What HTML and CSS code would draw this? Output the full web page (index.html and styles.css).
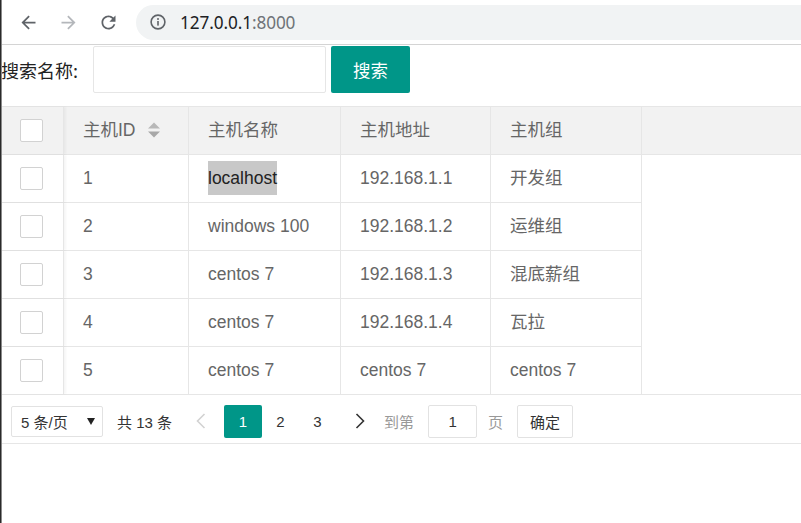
FILE: index.html
```html
<!DOCTYPE html>
<html lang="zh-CN">
<head>
<meta charset="utf-8">
<title>主机列表</title>
<link rel="stylesheet" href="styles.css">
</head>
<body>
<div class="window-edge"></div>
<header class="browser-bar">
  <span class="nav-btn">
    <svg viewBox="0 0 24 24"><path class="ico-dark" d="M20 11H7.830l5.59-5.59L12 4l-8 8 8 8 1.41-1.41L7.830 13H20v-2z"/></svg>
  </span>
  <span class="nav-btn">
    <svg viewBox="0 0 24 24"><path class="ico-light" d="M4 11h12.17l-5.59-5.59L12 4l8 8-8 8-1.41-1.41L16.17 13H4v-2z"/></svg>
  </span>
  <span class="nav-btn">
    <svg viewBox="0 0 24 24"><path class="ico-dark" d="M17.65 6.35C16.2 4.9 14.21 4 12 4c-4.42 0-7.99 3.58-7.99 8s3.57 8 7.99 8c3.73 0 6.84-2.55 7.73-6h-2.08c-.82 2.33-3.04 4-5.65 4-3.31 0-6-2.69-6-6s2.69-6 6-6c1.66 0 3.14.69 4.22 1.78L13 11h7V4l-2.35 2.35z"/></svg>
  </span>
  <div class="omnibox">
    <svg class="info-ico" viewBox="0 0 16 16">
      <circle cx="8" cy="8" r="6.9" fill="none" stroke="#5f6368" stroke-width="1.6"/>
      <rect x="7.2" y="7" width="1.6" height="4.6" fill="#5f6368"/>
      <circle cx="8" cy="4.9" r="1" fill="#5f6368"/>
    </svg>
    <span class="url"><span class="host">127.0.0.1</span><span class="port">:8000</span></span>
  </div>
</header>

<main class="page">
  <form class="search-row">
    <label class="search-label">搜索名称:</label>
    <input class="search-input" type="text">
    <button class="btn-primary" type="button">搜索</button>
  </form>

  <div class="table">
    <div class="thead">
      <div class="cell check"><span class="checkbox"></span></div>
      <div class="cell">主机ID
        <svg class="sort" viewBox="0 0 12 16"><polygon points="0,6.5 6,0.5 12,6.5" fill="#b8b8b8"/><polygon points="0,9.5 6,15.5 12,9.5" fill="#a8a8a8"/></svg>
      </div>
      <div class="cell">主机名称</div>
      <div class="cell">主机地址</div>
      <div class="cell">主机组</div>
      <div class="cell filler"></div>
    </div>
    <div class="tr">
      <div class="cell check"><span class="checkbox"></span></div>
      <div class="cell">1</div>
      <div class="cell"><span class="selected">localhost</span></div>
      <div class="cell">192.168.1.1</div>
      <div class="cell">开发组</div>
    </div>
    <div class="tr">
      <div class="cell check"><span class="checkbox"></span></div>
      <div class="cell">2</div>
      <div class="cell">windows 100</div>
      <div class="cell">192.168.1.2</div>
      <div class="cell">运维组</div>
    </div>
    <div class="tr">
      <div class="cell check"><span class="checkbox"></span></div>
      <div class="cell">3</div>
      <div class="cell">centos 7</div>
      <div class="cell">192.168.1.3</div>
      <div class="cell">混底薪组</div>
    </div>
    <div class="tr">
      <div class="cell check"><span class="checkbox"></span></div>
      <div class="cell">4</div>
      <div class="cell">centos 7</div>
      <div class="cell">192.168.1.4</div>
      <div class="cell">瓦拉</div>
    </div>
    <div class="tr">
      <div class="cell check"><span class="checkbox"></span></div>
      <div class="cell">5</div>
      <div class="cell">centos 7</div>
      <div class="cell">centos 7</div>
      <div class="cell">centos 7</div>
    </div>
  </div>

  <div class="pager">
    <div class="page-size"><span>5 条/页</span><svg class="caret" viewBox="0 0 8 7"><polygon points="0,0 8,0 4,7" fill="#222"/></svg></div>
    <span class="total">共 13 条</span>
    <span class="pg prev"><svg viewBox="0 0 10 16"><polyline points="8.5,1 1.5,8 8.5,15" fill="none" stroke="#d2d2d2" stroke-width="1.6"/></svg></span>
    <span class="pg active">1</span>
    <span class="pg">2</span>
    <span class="pg">3</span>
    <span class="pg next"><svg viewBox="0 0 10 16"><polyline points="1.5,1 8.5,8 1.5,15" fill="none" stroke="#333" stroke-width="1.6"/></svg></span>
    <span class="muted goto">到第</span>
    <span class="jump-input">1</span>
    <span class="muted page-word">页</span>
    <span class="btn-confirm">确定</span>
  </div>
</main>
</body>
</html>
```

FILE: styles.css
```css
* { box-sizing: border-box; }
html, body { margin: 0; padding: 0; background: #fff; }
body {
  width: 801px;
  height: 523px;
  overflow: hidden;
  position: relative;
  font-family: "Liberation Sans", "Noto Sans CJK SC", sans-serif;
  color: #666;
}

.window-edge {
  position: absolute;
  left: 0; top: 0; bottom: 0;
  width: 2px;
  background: linear-gradient(to right, #2a2a2a 0 1px, #8a8a8a 1px 2px);
  z-index: 10;
}

/* browser chrome */
.browser-bar {
  display: flex;
  align-items: center;
  height: 45px;
  border-bottom: 1px solid #d4d4d4;
  padding-left: 8px;
  overflow: hidden;
}
.nav-btn {
  width: 40px;
  height: 44px;
  display: flex;
  align-items: center;
  justify-content: center;
  flex: none;
}
.nav-btn svg { width: 21px; height: 21px; }
.ico-dark { fill: #5f6368; }
.ico-light { fill: #b4b7bb; }
.omnibox {
  flex: 1;
  margin-left: 8px;
  margin-right: -30px;
  height: 35px;
  border-radius: 18px;
  background: #f1f3f4;
  display: flex;
  align-items: center;
  padding-left: 14px;
  gap: 14px;
}
.info-ico { width: 16px; height: 16px; flex: none; }
.url { font-family: "Noto Sans", sans-serif; font-size: 17.2px; letter-spacing: -0.1px; }
.host { color: #202124; }
.port { color: #6f7378; }

/* search */
.search-row {
  display: flex;
  align-items: center;
  height: 47px;
  margin: 1px 0 0;
}
.search-label {
  width: 93px;
  padding-left: 1px;
  font-family: "Noto Sans CJK SC", sans-serif;
  font-size: 18px;
  color: #222;
}
.search-input {
  width: 233px;
  height: 47px;
  border: 1px solid #e6e6e6;
  border-radius: 2px;
  margin: 0;
  padding: 0 10px;
  background: #fff;
}
.btn-primary {
  margin-left: 5px;
  width: 79px;
  height: 47px;
  border: 0;
  border-radius: 2px;
  background: #009688;
  color: #fff;
  font-family: "Noto Sans CJK SC", sans-serif;
  font-size: 17.5px;
  padding: 0;
}

/* table */
.table { margin-top: 13px; }
.thead {
  display: grid;
  grid-template-columns: 64px 125px 152px 150px 151px 1fr;
  height: 49px;
  background: #f2f2f2;
  border-top: 1px solid #e6e6e6;
  border-bottom: 1px solid #e6e6e6;
}
.tr {
  display: grid;
  grid-template-columns: 64px 125px 152px 150px 151px;
  width: 642px;
  height: 48px;
  border-bottom: 1px solid #e6e6e6;
}
.tr:last-child { border-bottom: 0; height: 47px; }
.cell {
  border-right: 1px solid #e6e6e6;
  display: flex;
  align-items: center;
  padding: 0 0 2px 19px;
  font-size: 17.5px;
  line-height: 34px;
  white-space: nowrap;
  color: #666;
}
.thead .cell { padding-bottom: 1px; }
.cell.check {
  padding: 0;
  justify-content: center;
  box-shadow: 2px 0 2px rgba(0, 0, 0, 0.04);
}
.thead .cell.check { padding: 0; }
.thead .cell.filler { border-right: 0; }
.checkbox {
  width: 23px;
  height: 23px;
  border: 1px solid #d2d2d2;
  border-radius: 2px;
  background: #fff;
}
.sort { width: 12px; height: 16px; margin-left: 12px; }
.selected { background: #c8c8c8; color: #222; }

/* pager */
.pager {
  display: flex;
  align-items: center;
  height: 50px;
  padding: 4px 0 0 11px;
  border-top: 1px solid #e6e6e6;
  border-bottom: 1px solid #e6e6e6;
  font-family: "Liberation Sans", "Noto Sans CJK SC", sans-serif;
  font-size: 15px;
  color: #333;
}
.page-size {
  width: 92px;
  height: 31px;
  border: 1px solid #e2e2e2;
  border-radius: 2px;
  display: flex;
  align-items: center;
  justify-content: space-between;
  padding: 0 7px 0 9px;
}
.caret { width: 8px; height: 7px; }
.total { margin-left: 14px; }
.pg {
  width: 37px;
  height: 33px;
  display: flex;
  align-items: center;
  justify-content: center;
}
.pg svg { width: 10px; height: 16px; }
.prev { margin-left: 10px; width: 38px; }
.active { margin-left: 4px; width: 38px; background: #009688; color: #fff; border-radius: 2px; }
.next { margin-left: 5px; width: 38px; }
.muted { color: #999; }
.goto { margin-left: 5px; }
.jump-input {
  margin-left: 14px;
  width: 49px;
  height: 33px;
  border: 1px solid #e2e2e2;
  border-radius: 2px;
  display: flex;
  align-items: center;
  justify-content: center;
}
.page-word { margin-left: 11px; }
.btn-confirm {
  margin-left: 14px;
  width: 56px;
  height: 33px;
  border: 1px solid #e2e2e2;
  border-radius: 2px;
  display: flex;
  align-items: center;
  justify-content: center;
}
```
